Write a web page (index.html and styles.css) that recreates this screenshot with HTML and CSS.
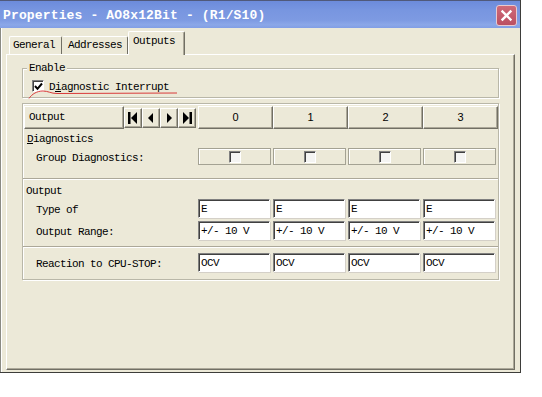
FILE: index.html
```html
<!DOCTYPE html>
<html>
<head>
<meta charset="utf-8">
<title>Properties</title>
<link rel="stylesheet" href="styles.css">
</head>
<body>
<div class="window">
  <div class="titlebar">
    <span class="title">Properties - AO8x12Bit - (R1/S10)</span>
    <span class="close"><svg width="19" height="19" viewBox="0 0 19 19"><path d="M5.5 5.5 L13.5 13.5 M13.5 5.5 L5.5 13.5" stroke="#fff" stroke-width="2.4" stroke-linecap="square"/></svg></span>
  </div>
  <div class="client">
    <div class="tabs">
      <div class="tab t-general">General</div>
      <div class="tab t-addr">Addresses</div>
      <div class="tab t-out active">Outputs</div>
    </div>
    <div class="panel">
      <fieldset class="enable">
        <legend>Enable</legend>
        <div class="check-row">
          <span class="cb"><svg width="9" height="9" viewBox="0 0 9 9"><path d="M1 4 L3.5 6.8 L8 1.5" fill="none" stroke="#000" stroke-width="2"/></svg></span>
          <span class="cb-label">D<u>i</u>agnostic Interrupt</span>
        </div>
      </fieldset>
      <svg class="redline" width="170" height="14" viewBox="0 0 170 14"><g transform="translate(-22,-87)"><path d="M28,98.5 C31,94 36,91 42,91 C47,91 50,93.5 56,93.5 L176,93" fill="none" stroke="#d93a3a" stroke-width="1"/></g></svg>

      <div class="params">
        <div class="row hdr">
          <div class="hdr-left">
            <div class="btn out-btn">Output</div>
            <div class="nav">
              <div class="btn nbtn"><svg width="16" height="18" viewBox="0 0 16 18"><rect x="3" y="3" width="2.5" height="12"/><polygon points="6,9 12,3 12,15"/></svg></div>
              <div class="btn nbtn"><svg width="16" height="18" viewBox="0 0 16 18"><polygon points="5,9 10,4 10,14"/></svg></div>
              <div class="btn nbtn"><svg width="16" height="18" viewBox="0 0 16 18"><polygon points="11,9 6,4 6,14"/></svg></div>
              <div class="btn nbtn"><svg width="16" height="18" viewBox="0 0 16 18"><polygon points="10,9 4,3 4,15"/><rect x="10.5" y="3" width="2.5" height="12"/></svg></div>
            </div>
          </div>
          <div class="btn colhdr">0</div>
          <div class="btn colhdr">1</div>
          <div class="btn colhdr">2</div>
          <div class="btn colhdr">3</div>
        </div>

        <div class="sec-title diag"><u>D</u>iagnostics</div>
        <div class="row grp">
          <div class="lbl">Group Diagnostics:</div>
          <div class="cell"><div class="cbox"><span class="cb small"></span></div></div>
          <div class="cell"><div class="cbox"><span class="cb small"></span></div></div>
          <div class="cell"><div class="cbox"><span class="cb small"></span></div></div>
          <div class="cell"><div class="cbox"><span class="cb small"></span></div></div>
        </div>

        <div class="sep sep1"></div>

        <div class="sec-title outp">Output</div>
        <div class="row frow r-type">
          <div class="lbl">Type of</div>
          <div class="cell"><div class="field">E</div></div>
          <div class="cell"><div class="field">E</div></div>
          <div class="cell"><div class="field">E</div></div>
          <div class="cell"><div class="field">E</div></div>
        </div>
        <div class="row frow r-range">
          <div class="lbl">Output Range:</div>
          <div class="cell"><div class="field">+/- 10 V</div></div>
          <div class="cell"><div class="field">+/- 10 V</div></div>
          <div class="cell"><div class="field">+/- 10 V</div></div>
          <div class="cell"><div class="field">+/- 10 V</div></div>
        </div>

        <div class="sep sep2"></div>

        <div class="row frow r-react">
          <div class="lbl">Reaction to CPU-STOP:</div>
          <div class="cell"><div class="field">OCV</div></div>
          <div class="cell"><div class="field">OCV</div></div>
          <div class="cell"><div class="field">OCV</div></div>
          <div class="cell"><div class="field">OCV</div></div>
        </div>
      </div>
    </div>
  </div>
</div>
</body>
</html>
```

FILE: styles.css
```css
* { box-sizing: border-box; }

html, body {
  margin: 0;
  padding: 0;
  background: #ffffff;
}

body {
  width: 542px;
  height: 397px;
  overflow: hidden;
  font-family: "Liberation Mono", "DejaVu Sans Mono", monospace;
  font-size: 11px;
  letter-spacing: -0.6px;
  color: #000;
}

.window {
  width: 521px;
  height: 373px;
  display: flex;
  flex-direction: column;
  background: #ece9d8;
  border-right: 1px solid #3d3d3a;
  border-bottom: 1px solid #3d3d3a;
}

/* ---------- title bar ---------- */
.titlebar {
  height: 28px;
  flex: 0 0 28px;
  display: flex;
  align-items: center;
  justify-content: space-between;
  padding: 0 3px 0 3px;
  border-top: 1px solid #50597a;
  background: linear-gradient(to bottom, #6c8bdb 0%, #7896e0 35%, #7d9ae2 70%, #8ba7e8 88%, #819ee5 100%);
}

.title {
  font-family: "Liberation Mono", "DejaVu Sans Mono", monospace;
  font-weight: bold;
  font-size: 13px;
  letter-spacing: 0.15px;
  color: #ffffff;
  white-space: pre;
  margin-top: 1px;
}

.close {
  width: 21px;
  height: 21px;
  margin-top: 2px;
  border: 1px solid #e9c9cf;
  border-radius: 3px;
  background: linear-gradient(to bottom, #cf6a78, #bb4f62);
  display: flex;
  align-items: center;
  justify-content: center;
}

.close svg { display: block; }

/* ---------- client ---------- */
.client {
  flex: 1 1 auto;
  display: flex;
  flex-direction: column;
  padding: 0 0 2px 5px;
  border-left: 1px solid #8a8a82;
  box-shadow: inset 1px 0 #ffffff;
}

.tabs {
  height: 26px;
  flex: 0 0 26px;
  display: flex;
  align-items: flex-end;
  padding-left: 3px;
  position: relative;
  z-index: 2;
}

.tab {
  height: 18px;
  line-height: 17px;
  background: #ece9d8;
  border-top: 1px solid #ffffff;
  border-left: 1px solid #ffffff;
  border-right: 1px solid #716f64;
  border-radius: 2px 2px 0 0;
  white-space: pre;
}

.t-general { width: 53px; padding-left: 3px; }
.t-addr { width: 66px; padding-left: 5px; border-left-color: #ece9d8; }
.t-out {
  width: 57px;
  padding-left: 4px;
}

.tab.active {
  height: 24px;
  line-height: 18px;
  margin-bottom: -1px;
  box-shadow: inset -1px 0 #aca899;
}

.panel {
  width: 509px;
  height: 316px;
  position: relative;
  background: #ece9d8;
  border-top: 1px solid #ffffff;
  border-left: 1px solid #ffffff;
  border-right: 1px solid #716f64;
  border-bottom: 1px solid #716f64;
  box-shadow: inset -1px -1px #aca899;
  padding: 0 15px;
}

/* ---------- enable group ---------- */
.enable {
  width: 477px;
  margin: 7px 0 0 0;
  padding: 0 0 5px 4px;
  border: 1px solid #b9b7a8;
  box-shadow: inset 1px 1px #ffffff, 1px 1px #ffffff;
}

.enable legend {
  padding: 0 2px;
  line-height: 12px;
  background: #ece9d8;
  position: relative;
}

.check-row {
  display: flex;
  align-items: center;
  margin-top: 6px;
  padding-left: 5px;
  height: 12px;
}

.cb {
  width: 12px;
  height: 12px;
  display: inline-flex;
  align-items: center;
  justify-content: center;
  background: #ffffff;
  border-top: 1px solid #808080;
  border-left: 1px solid #808080;
  border-right: 1px solid #ffffff;
  border-bottom: 1px solid #ffffff;
  box-shadow: inset 1px 1px #404040;
}

.cb svg { display: block; margin: 1px 0 0 1px; }

.cb-label {
  margin-left: 5px;
  line-height: 12px;
  padding-top: 1px;
}

.redline {
  position: absolute;
  left: 16px;
  top: 32px;
}

/* ---------- parameter table ---------- */
.params {
  width: 477px;
  margin-top: 5px;
  padding: 1px 0 7px 1px;
  border: 1px solid #b9b7a8;
  box-shadow: inset 1px 1px #ffffff, 1px 1px #ffffff;
}

.row {
  display: flex;
  align-items: center;
}

.hdr { height: 23px; margin-top: 1px; }

.hdr-left {
  width: 174px;
  height: 23px;
  display: flex;
  align-items: center;
}

.btn {
  background: #ece9d8;
  border-top: 1px solid #ffffff;
  border-left: 1px solid #ffffff;
  border-right: 1px solid #716f64;
  border-bottom: 1px solid #716f64;
  box-shadow: inset -1px -1px #aca899;
}

.out-btn {
  width: 100px;
  height: 23px;
  line-height: 20px;
  padding-left: 4px;
}

.nav {
  display: flex;
  height: 20px;
}

.nbtn {
  width: 18px;
  height: 20px;
  display: flex;
  align-items: center;
  justify-content: center;
}

.nbtn svg { display: block; fill: #000; }

.colhdr {
  width: 75px;
  height: 23px;
  line-height: 20px;
  text-align: center;
  font-family: "Liberation Sans", Arial, sans-serif;
  font-size: 11px;
  letter-spacing: 0;
}

.sec-title {
  line-height: 14px;
  height: 14px;
}

.diag { margin-top: 3px; padding-left: 3px; }
.outp { margin-top: 4px; padding-left: 2px; }

.lbl {
  width: 174px;
  padding-left: 12px;
  line-height: 14px;
  padding-top: 2px;
  white-space: pre;
}

.cell { width: 75px; }

.grp { height: 17px; margin-top: 2px; }

.cbox {
  width: 73px;
  height: 17px;
  border: 1px solid #a4a293;
  box-shadow: inset 1px 1px #ffffff;
  display: flex;
  align-items: center;
  justify-content: center;
}

.cb.small {
  width: 12px;
  height: 12px;
  background: #f4f4f2;
  margin-left: 1px;
}

.sep {
  height: 2px;
  margin-left: -1px;
  border-top: 1px solid #aca899;
  border-bottom: 1px solid #ffffff;
}

.sep1 { margin-top: 13px; }
.sep2 { margin-top: 6px; }

.frow { height: 19px; }
.r-type { margin-top: 1px; }
.r-range { margin-top: 3px; }
.r-react { margin-top: 5px; }

.field {
  width: 72px;
  height: 19px;
  background: #ffffff;
  border-top: 1px solid #808080;
  border-left: 1px solid #808080;
  border-right: 1px solid #ffffff;
  border-bottom: 1px solid #ffffff;
  box-shadow: inset 1px 1px #404040, 1px 1px #d4d0c8;
  padding: 2px 0 0 2px;
  line-height: 14px;
  white-space: pre;
  overflow: hidden;
}
```
